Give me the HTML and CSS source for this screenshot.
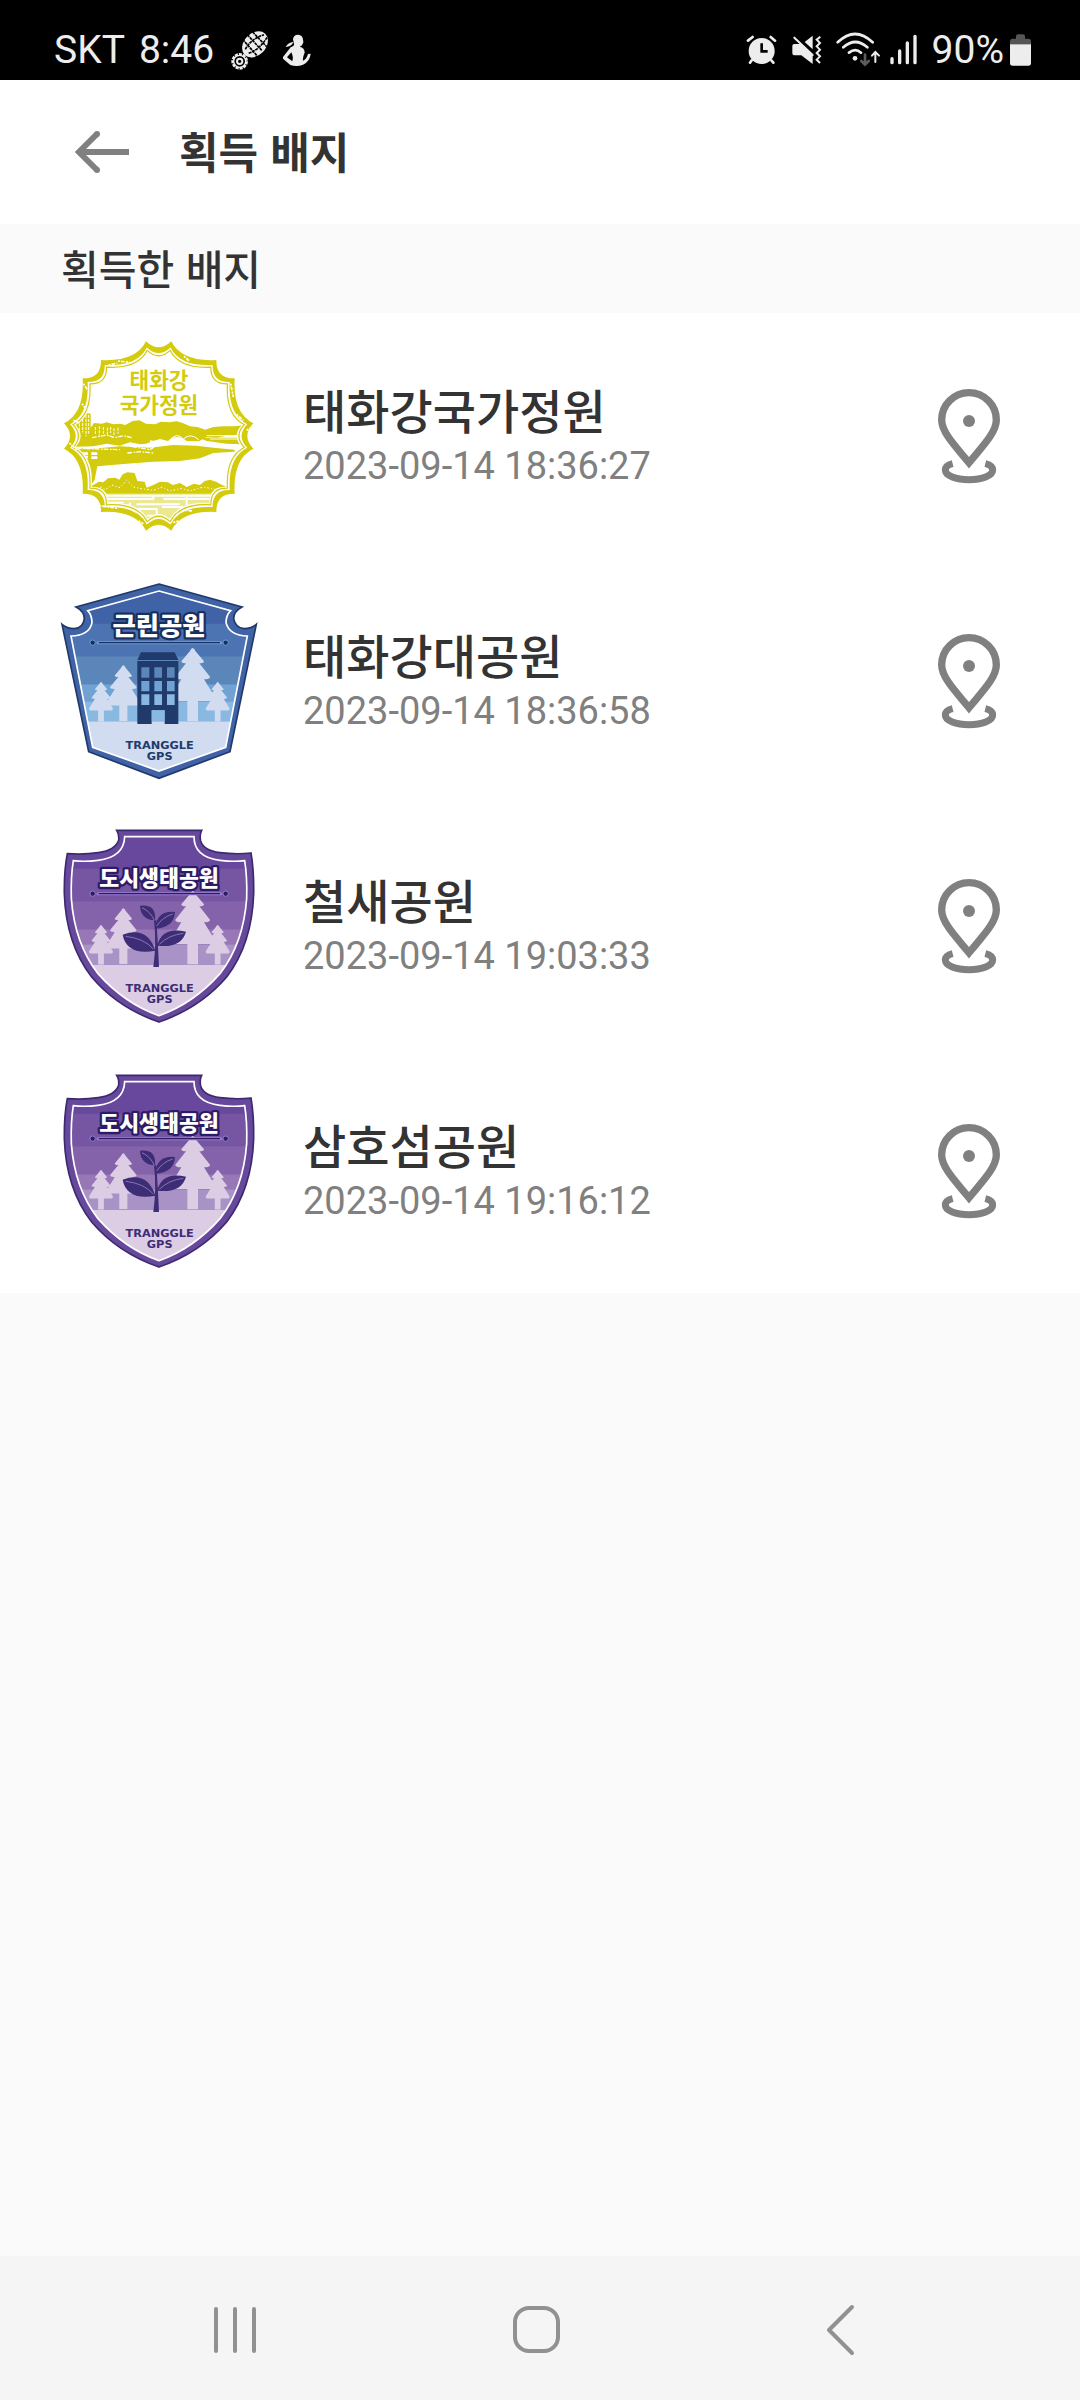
FILE: index.html
```html
<!DOCTYPE html>
<html lang="ko">
<head>
  <meta charset="UTF-8">
  <meta name="viewport" content="width=device-width, initial-scale=1">
  <title>획득 배지</title>
  <link rel="stylesheet" href="styles.css">
</head>
<body>
  <!-- shared shapes -->
  <svg class="defs" width="0" height="0" aria-hidden="true">
    <symbol id="pin" viewBox="63 82 288 288">
      <path d="M207 306C170 261 125 216 125 178a82 82 0 0 1 164 0c0 38-45 83-82 128z" fill="none" stroke="#808080" stroke-width="22"/>
      <circle cx="207" cy="181" r="18" fill="#808080"/>
      <path d="M158 309C142 313 136 320 136 328c0 17 32 29 71 29s71-12 71-29c0-8-6-15-22-19" fill="none" stroke="#808080" stroke-width="21"/>
    </symbol>
    <path id="tree" d="M0 0Q6 2 8 9L34 40Q34 46 20 46L52 86Q54 93 34 94L66 146Q68 158 54 159H16V220H-16V159H-54Q-68 158-66 146L-34 94Q-54 93-52 86L-20 46Q-34 46-34 40L-8 9Q-6 2 0 0Z"/>
    <g id="trees">
      <use href="#tree" transform="translate(458 248)"/>
      <use href="#tree" transform="translate(250 300) scale(.76)"/>
      <use href="#tree" transform="translate(183 350) scale(.54)"/>
      <use href="#tree" transform="translate(533 350) scale(.54)"/>
    </g>
    <path id="stamp" d="M38-284Q69-222 173-228Q172-172 228-173Q222-69 284-38Q248 0 284 38Q222 69 228 173Q172 172 173 228Q69 222 38 284Q0 248-38 284Q-69 222-173 228Q-172 172-228 173Q-222 69-284 38Q-248 0-284-38Q-222-69-228-173Q-172-172-173-228Q-69-222-38-284Q0-248 38-284Z"/>
    <clipPath id="stampClip"><use href="#stamp" transform="translate(356 347) scale(.88)"/></clipPath>
    <path id="cityInner" d="M357 77L572 136Q558 150 558 172Q568 211 622 212L557 546L357 617L158 546L93 212Q148 211 156 172Q156 150 143 136Z"/>
    <clipPath id="cityClip"><use href="#cityInner"/></clipPath>
    <path id="ecoInner" d="M254 79H462Q462 140 540 150Q580 155 614 151Q622 200 620 265Q610 400 540 490Q460 580 357 616Q254 580 174 490Q104 400 94 265Q92 200 100 151Q134 155 174 150Q252 140 254 79Z"/>
    <clipPath id="ecoClip"><use href="#ecoInner"/></clipPath>

    <g id="ecoShield">
      <path d="M230 60H485Q478 74 482 92Q490 120 540 127Q590 133 633 128Q642 180 641 250Q636 400 560 500Q480 593 357 635Q234 593 155 500Q78 400 73 250Q72 180 82 130Q130 134 175 127Q226 120 236 90Q238 72 230 60Z" fill="#68489c" stroke="#3b2a70" stroke-width="5"/>
      <g clip-path="url(#ecoClip)">
        <path d="M60 175h600v98H60z" fill="#7655a3"/>
        <path d="M60 273h600v84H60z" fill="#8563aa"/>
        <path d="M60 357h600v45H60z" fill="#9777b5"/>
        <path d="M60 402h600v62H60z" fill="#a892c6"/>
        <path d="M60 464h600v180H60z" fill="#dccde4"/>
        <use href="#trees" fill="#dccde4" transform="translate(0 -6)"/>
      </g>
      <use href="#ecoInner" fill="none" stroke="#fff" stroke-width="5"/>
      <path d="M174 250H542" stroke="#9a7fd0" stroke-width="9" stroke-linecap="round"/>
      <path d="M176 250H540" stroke="#2c1b66" stroke-width="4"/>
      <g fill="#2c1b66" stroke="#9a7fd0" stroke-width="3"><circle cx="158" cy="250" r="8"/><circle cx="557" cy="250" r="8"/></g>
      <g fill="#3d2c76">
        <path d="M340 470Q350 400 342 330H349Q354 400 357 470Z"/>
        <path d="M345 330Q302 328 300 286Q350 280 345 330Z"/>
        <path d="M345 355Q350 300 405 305Q402 352 345 355Z"/>
        <path d="M346 421Q260 436 248 373Q322 346 346 421Z"/>
        <path d="M352 406Q365 348 438 364Q424 414 352 406Z"/>
      </g>
      <path d="M306 292Q332 304 343 330M398 311Q368 320 350 347M257 378Q312 384 340 416M430 369Q386 374 358 402" fill="none" stroke="#8975b1" stroke-width="3"/>
    </g>
  </svg>

  <div class="status-bar">
    <div class="status-left">
      <span>SKT</span>
      <span>8:46</span>
      <svg width="44" height="48" viewBox="678 78 132 144">
        <ellipse cx="759" cy="133" rx="33" ry="44" transform="rotate(44 759 133)" fill="#ededed"/>
        <path d="M722 118l42 48M736 104l44 48M752 96l42 44M730 148Q745 118 786 104M740 160Q774 148 795 112" fill="none" stroke="#000" stroke-width="5" stroke-dasharray="9 2"/>
        <circle cx="713" cy="184" r="21" fill="none" stroke="#ededed" stroke-width="8" stroke-dasharray="9 3"/>
        <circle cx="713" cy="184" r="18" fill="none" stroke="#ededed" stroke-width="4"/>
        <circle cx="713" cy="184" r="8" fill="none" stroke="#ededed" stroke-width="6"/>
      </svg>
      <svg width="34" height="48" viewBox="834 78 102 144">
        <g fill="#ededed">
          <path d="M873 118Q874 104 888 104Q903 105 903 120Q906 126 902 132Q899 139 893 140Q908 143 908 158Q901 174 903 182Q914 178 918 162L926 161Q924 184 903 194Q885 201 865 195L843 176V171L866 142Q878 138 876 132Z"/>
          <path d="M874 126Q869 140 851 141Q858 127 874 126Z"/>
        </g>
        <path d="M868 157L855 172L871 184Q875 170 868 157Z"/>
      </svg>
    </div>
    <div class="status-right">
      <svg width="31" height="48" viewBox="81 78 93 144">
        <circle cx="128" cy="153" r="39" fill="#ededed"/>
        <path d="M87 122L101 111M155 111L168 122M98 181L93 188M157 181L163 188" stroke="#ededed" stroke-width="8" stroke-linecap="round"/>
        <path d="M128 130V154H146" fill="none" stroke="#000" stroke-width="8"/>
      </svg>
      <svg width="31" height="48" viewBox="216 78 93 144">
        <path d="M220 137q0-5 6-5h18L281 166V192L247 166H226q-6 0-6-6zM281 107V148L257 126Z" fill="#ededed"/>
        <path d="M226 113L281 165" stroke="#ededed" stroke-width="6" stroke-linecap="round"/>
        <path d="M304 110L293 119L303 129L293 139L303 149L293 159L303 169L293 179L303 189" fill="none" stroke="#ededed" stroke-width="6"/>
      </svg>
      <svg width="82" height="48" viewBox="348 78 246 144">
        <g fill="none" stroke="#ededed" stroke-width="8" stroke-linecap="round">
          <path d="M353 127Q405 77 458 127M370 142Q406 110 442 142M387 158Q406 143 423 158"/>
          <path d="M466 186V158M456 167L466 156L477 167" stroke-width="6"/>
          <path d="M435 164V192M424 183L435 194L446 183" stroke="#5c5c5c"/>
        </g>
        <circle cx="405" cy="175" r="7" fill="#ededed"/>
        <path d="M516 176V188M539 153V188M562 129V188M585 109V188" stroke="#ededed" stroke-width="10" stroke-linecap="round"/>
      </svg>
      <span class="battery-text">90%</span>
      <svg width="23" height="48" viewBox="867 78 69 144">
        <path d="M870 133V124q0-8 8-8h10v-7q0-6 6-6h15q6 0 6 6v7h10q8 0 8 8v9z" fill="#555"/>
        <path d="M870 133h63v56q0 8-8 8h-47q-8 0-8-8z" fill="#ededed"/>
      </svg>
    </div>
  </div>

  <header class="app-bar">
    <button class="back" type="button" aria-label="뒤로">
      <svg width="54" height="48" viewBox="0 0 54 48">
        <path d="M54 24H5M22 6L4 24L22 42" fill="none" stroke="#808080" stroke-width="6"/>
        <circle cx="22" cy="6" r="3" fill="#808080"/><circle cx="22" cy="42" r="3" fill="#808080"/>
      </svg>
    </button>
    <h1>획득 배지</h1>
  </header>

  <main>
    <h2>획득한 배지</h2>
    <ul class="badge-list">
      <li>
        <svg class="badge" viewBox="57 47 600 600">
          <g transform="translate(356 347)">
            <use href="#stamp" fill="#d3cb0c"/>
            <use href="#stamp" fill="#fff" transform="scale(.935)"/>
            <use href="#stamp" fill="none" stroke="#d3cb0c" stroke-width="4" transform="scale(.905)"/>
          </g>
          <g clip-path="url(#stampClip)" fill="#d3cb0c">
            <path d="M80 330L104 330V284L124 282V276L152 280V322L162 308L186 310L200 306L220 312L240 310L256 314L278 302L298 300L318 310L346 312L362 304L388 306L410 303L428 308L450 318L472 320L496 328L520 320L550 318L582 318L625 314V342L560 346L530 352L500 350L478 362L440 362Q412 338 384 362L360 356L340 362L318 370L300 372L270 366L240 376L200 370L160 378L90 380Z"/>
            <path d="M84 382L150 386L240 378L330 382L400 374L470 376L520 382L584 388V394L520 398L480 414L420 422L340 424L260 430L172 438L164 478L150 500L130 430L96 390Z"/>
            <path d="M478 352L625 352V372L560 370L500 362Z"/>
            <path d="M146 520V500L164 492L176 484L190 486L204 474L226 472L238 478L248 462L262 456L284 458L292 482L314 484L320 502L340 494L360 484L384 486L398 494L420 488L440 500L462 490L480 494L494 482L510 478L528 484L546 494L562 500V520Z"/>
            <path d="M130 520H590V640H130Z" opacity=".45"/>
          </g>
          <g clip-path="url(#stampClip)" fill="none" stroke="#fff">
            <path d="M108 288V344M118 286V348M128 284V336M138 284V348M146 284V340M166 320V342M178 318V346M190 320V340M202 322V344M212 320V338M222 324V344M234 322V340" stroke-width="3" stroke-dasharray="9 3"/>
            <path d="M156 352L200 344L224 352L250 346L276 352M110 384L240 388M250 374L330 388L350 376M386 368L460 370M496 366L580 376M262 398L300 394L340 398M330 362L372 368" stroke-width="4" stroke-dasharray="14 5 5 3"/>
            <path d="M388 360Q410 334 430 356Q452 336 476 358M500 346H604M510 356H606" stroke-width="3"/>
            <path d="M126 400H144M154 400H172M128 410H144M154 412H172" stroke-width="8"/>
            <path d="M160 506L182 500L196 508L216 494L240 502L260 480L280 500L310 506L340 510L366 500L390 512L424 504L450 512L490 500L530 508" stroke-width="3" stroke-dasharray="5 7 3 6"/>
            <path d="M150 526H560M180 536H340V526M370 536H540M200 547H250M270 547V590M290 552H420M440 560V530M290 566H350V586H320M366 560H430M300 598H400M320 608H390" stroke-width="6"/>
          </g>
          <path d="M234 122l36 4M206 134l26-6M282 96l16-10M432 108l16 14M130 190l12 18M126 250l14 20M572 190l8 40M590 282l20 18M100 300l22 10M88 368l24 22M178 556l56 8M546 540l30-6M400 606l16-4M296 602l14 8M436 570l22 2M620 330l14-8" stroke="#fff" stroke-width="5" stroke-dasharray="6 3 11 4"/>
          <text class="stamp-text" x="357" y="203">태화강</text>
          <text class="stamp-text" x="357" y="278">국가정원</text>
        </svg>
        <div class="info">
          <strong>태화강국가정원</strong>
          <time>2023-09-14 18:36:27</time>
        </div>
        <button class="map" type="button" aria-label="위치 보기"><svg><use href="#pin"/></svg></button>
      </li>
      <li>
        <svg class="badge" viewBox="57 47 600 600">
          <path d="M357 56L606 125Q581 138 581 160Q586 188 612 190Q634 190 649 177L570 559L357 639L146 559L66 177Q81 190 103 190Q130 188 133 160Q133 138 108 125Z" fill="#4062a6" stroke="#203968" stroke-width="5"/>
          <g clip-path="url(#cityClip)">
            <path d="M60 175h600v98H60z" fill="#4d74b2"/>
            <path d="M60 273h600v84H60z" fill="#5b86b9"/>
            <path d="M60 357h600v51H60z" fill="#70a3d4"/>
            <path d="M60 408h600v60H60z" fill="#89b8e1"/>
            <path d="M60 468h600v180H60z" fill="#d1dcf0"/>
            <use href="#trees" fill="#d1dcf0"/>
          </g>
          <use href="#cityInner" fill="none" stroke="#fff" stroke-width="5"/>
          <path d="M174 232H542" stroke="#6f9fd8" stroke-width="9" stroke-linecap="round"/>
          <path d="M176 232H540" stroke="#17305f" stroke-width="4"/>
          <g fill="#17305f" stroke="#6f9fd8" stroke-width="3"><circle cx="158" cy="232" r="8"/><circle cx="557" cy="232" r="8"/></g>
          <path d="M303 261H404L415 284H292Z" fill="#203a6b"/>
          <path d="M292 287H415V476H374V435H335V476H292Z" fill="#203a6b"/>
          <path d="M304 306h24v31h-24zM343 306h23v31h-23zM381 306h23v31h-23z" fill="#5b86b9"/>
          <path d="M304 347h24v31h-24zM343 347h23v31h-23zM381 347h23v31h-23z" fill="#70a3d4"/>
          <path d="M304 387h24v32h-24zM343 387h23v32h-23zM381 387h23v32h-23zM335 435h39v33h-39z" fill="#89b8e1"/>
          <text class="badge-name city" x="357" y="208">근린공원</text>
          <text class="badge-brand city" x="359" y="550">TRANGGLE</text>
          <text class="badge-brand city" x="359" y="583">GPS</text>
        </svg>
        <div class="info">
          <strong>태화강대공원</strong>
          <time>2023-09-14 18:36:58</time>
        </div>
        <button class="map" type="button" aria-label="위치 보기"><svg><use href="#pin"/></svg></button>
      </li>
      <li>
        <svg class="badge" viewBox="57 47 600 600">
          <use href="#ecoShield"/>
          <text class="badge-name eco" x="357" y="227">도시생태공원</text>
          <text class="badge-brand eco" x="359" y="545">TRANGGLE</text>
          <text class="badge-brand eco" x="359" y="578">GPS</text>
        </svg>
        <div class="info">
          <strong>철새공원</strong>
          <time>2023-09-14 19:03:33</time>
        </div>
        <button class="map" type="button" aria-label="위치 보기"><svg><use href="#pin"/></svg></button>
      </li>
      <li>
        <svg class="badge" viewBox="57 47 600 600">
          <use href="#ecoShield"/>
          <text class="badge-name eco" x="357" y="227">도시생태공원</text>
          <text class="badge-brand eco" x="359" y="545">TRANGGLE</text>
          <text class="badge-brand eco" x="359" y="578">GPS</text>
        </svg>
        <div class="info">
          <strong>삼호섬공원</strong>
          <time>2023-09-14 19:16:12</time>
        </div>
        <button class="map" type="button" aria-label="위치 보기"><svg><use href="#pin"/></svg></button>
      </li>
    </ul>
  </main>

  <nav class="nav-bar">
    <button type="button" aria-label="최근 앱">
      <svg width="52" height="52" viewBox="0 0 52 52"><path d="M7 5V47M26 5V47M45 5V47"/></svg>
    </button>
    <button type="button" aria-label="홈">
      <svg width="52" height="52" viewBox="0 0 52 52"><rect x="4" y="4" width="43" height="43" rx="14"/></svg>
    </button>
    <button type="button" aria-label="뒤로">
      <svg width="52" height="52" viewBox="0 0 52 52"><path d="M39 3L16 26L39 49"/></svg>
    </button>
  </nav>
</body>
</html>
```
FILE: styles.css
```css
* {
  box-sizing: border-box;
}

body {
  margin: 0;
  min-height: 100vh;
  display: flex;
  flex-direction: column;
  background: #fafafa;
  color: #333;
  font-family: "Noto Sans CJK KR", sans-serif;
}

button {
  padding: 0;
  border: none;
  background: none;
  cursor: pointer;
}

svg {
  display: block;
}

.defs {
  position: absolute;
}

/* status bar */
.status-bar {
  display: flex;
  justify-content: space-between;
  height: 80px;
  padding: 20px 48px 0 54px;
  background: #000;
  color: #ededed;
  font-family: Roboto, sans-serif;
  font-size: 39px;
  line-height: 60px;
}

.status-left,
.status-right {
  display: flex;
  align-items: center;
}

.status-left {
  gap: 14px;
}

.status-left svg + svg {
  margin-left: -6px;
}

.status-right {
  gap: 14px;
}

.battery-text {
  margin-right: -9px;
}

/* header */
.app-bar {
  display: flex;
  align-items: center;
  gap: 50px;
  height: 144px;
  padding: 0 75px;
  background: #fff;
}

h1 {
  margin: 0;
  padding-bottom: 4px;
  font-size: 43px;
  font-weight: 700;
  line-height: 60px;
}

main {
  flex: 1;
}

h2 {
  margin: 0;
  padding: 14px 61px 17px;
  font-size: 41px;
  font-weight: 500;
  line-height: 58px;
}

/* badges */
.badge-list {
  margin: 0;
  padding: 0;
  list-style: none;
  background: #fff;
}

.badge-list li {
  display: flex;
  align-items: center;
  height: 245px;
  padding: 0 63px 0 59px;
}

.badge {
  flex: none;
  width: 200px;
  height: 200px;
}

.info {
  flex: 1;
  display: flex;
  flex-direction: column;
  padding: 4px 0 0 44px;
}

.info strong {
  font-size: 47px;
  font-weight: 500;
  line-height: 56px;
}

.info time {
  color: #808080;
  font-family: Roboto, sans-serif;
  font-size: 38px;
  line-height: 58px;
}

.map svg {
  width: 96px;
  height: 96px;
}

.stamp-text {
  fill: #d3cb0c;
  font-size: 64px;
  font-weight: 700;
  text-anchor: middle;
}

.badge-name {
  fill: #fff;
  font-weight: 900;
  stroke-width: 14px;
  stroke-linejoin: round;
  paint-order: stroke;
  text-anchor: middle;
}

.badge-name.city {
  font-size: 76px;
  stroke: #17305f;
}

.badge-name.eco {
  font-size: 65px;
  stroke: #2c1b66;
}

.badge-brand {
  font-family: "DejaVu Sans", sans-serif;
  font-size: 34px;
  font-weight: 700;
  text-anchor: middle;
}

.badge-brand.city {
  fill: #203a6b;
}

.badge-brand.eco {
  fill: #3d2c76;
}

/* system navigation */
.nav-bar {
  display: flex;
  height: 144px;
  padding: 4px 90px 0 84px;
  background: #f5f5f5;
}

.nav-bar button {
  flex: 1;
  display: flex;
  align-items: center;
  justify-content: center;
}

.nav-bar svg {
  fill: none;
  stroke: #919191;
  stroke-width: 4px;
  stroke-linecap: round;
  stroke-linejoin: round;
}
```
